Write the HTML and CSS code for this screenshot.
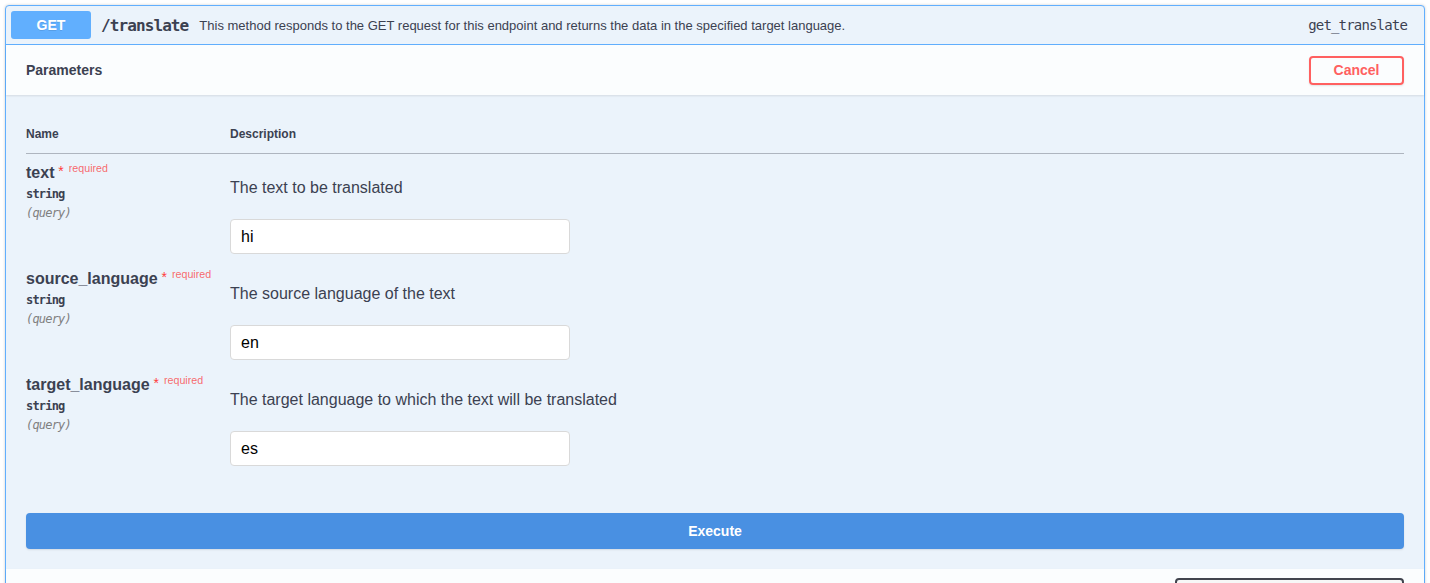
FILE: index.html
```html
<!DOCTYPE html>
<html lang="en">
<head>
<meta charset="utf-8">
<title>GET /translate</title>
<link rel="stylesheet" href="styles.css">
</head>
<body>
<div class="opblock">
  <div class="summary">
    <span class="method">GET</span>
    <span class="path">/translate</span>
    <span class="summary-desc">This method responds to the GET request for this endpoint and returns the data in the specified target language.</span>
    <span class="op-id">get_translate</span>
  </div>
  <div class="section-header">
    <h4 class="section-title">Parameters</h4>
    <button class="btn-cancel" type="button">Cancel</button>
  </div>
  <div class="table-container">
    <div class="param-head">
      <div class="col-name">Name</div>
      <div class="col-desc">Description</div>
    </div>
    <div class="param-row">
      <div class="col-name">
        <div class="param-name">text<span class="star">&nbsp;*</span><span class="req">required</span></div>
        <div class="param-type">string</div>
        <div class="param-in">(query)</div>
      </div>
      <div class="col-desc">
        <p class="desc-text">The text to be translated</p>
        <input class="param-input" type="text" value="hi">
      </div>
    </div>
    <div class="param-row">
      <div class="col-name">
        <div class="param-name">source_language<span class="star">&nbsp;*</span><span class="req">required</span></div>
        <div class="param-type">string</div>
        <div class="param-in">(query)</div>
      </div>
      <div class="col-desc">
        <p class="desc-text">The source language of the text</p>
        <input class="param-input" type="text" value="en">
      </div>
    </div>
    <div class="param-row">
      <div class="col-name">
        <div class="param-name">target_language<span class="star">&nbsp;*</span><span class="req">required</span></div>
        <div class="param-type">string</div>
        <div class="param-in">(query)</div>
      </div>
      <div class="col-desc">
        <p class="desc-text">The target language to which the text will be translated</p>
        <input class="param-input" type="text" value="es">
      </div>
    </div>
  </div>
  <div class="execute-wrapper">
    <button class="btn-execute" type="button">Execute</button>
  </div>
  <div class="section-header responses-header">
    <div class="ct-select" aria-label="Response content type"></div>
  </div>
</div>
</body>
</html>
```

FILE: styles.css
```css
* { box-sizing: border-box; }

body {
  margin: 0;
  background: #ffffff;
  font-family: "Liberation Sans", Arial, sans-serif;
  color: #3b4151;
}

.opblock {
  margin: 5px;
  border: 1px solid #61affe;
  border-radius: 4px;
  background: #ebf3fb;
  box-shadow: 0 0 3px rgba(0, 0, 0, 0.19);
}

.summary {
  display: flex;
  align-items: center;
  padding: 5px 17px 5px 5px;
  border-bottom: 1px solid #61affe;
}

.method {
  width: 80px;
  height: 28px;
  display: flex;
  align-items: center;
  justify-content: center;
  background: #61affe;
  color: #ffffff;
  border-radius: 3px;
  font-size: 14px;
  font-weight: 700;
  text-shadow: 0 1px 0 rgba(0, 0, 0, 0.1);
}

.path {
  padding: 0 10px;
  font-family: "DejaVu Sans Mono", monospace;
  font-size: 16px;
  letter-spacing: -0.9px;
  font-weight: 700;
  color: #3b4151;
}

.summary-desc {
  flex: 1 1 auto;
  margin-left: 1px;
  font-size: 13px;
  color: #3b4151;
}

.op-id {
  font-family: "DejaVu Sans Mono", monospace;
  font-size: 14px;
  letter-spacing: -0.83px;
  color: #3b4151;
}

.section-header {
  display: flex;
  align-items: center;
  justify-content: space-between;
  min-height: 50px;
  padding: 8px 20px;
  background: rgba(255, 255, 255, 0.8);
  box-shadow: 0 1px 2px rgba(0, 0, 0, 0.1);
}

.section-title {
  margin: 0;
  font-size: 14px;
  font-weight: 700;
  color: #3b4151;
}

.btn-cancel {
  width: 95px;
  height: 29px;
  padding: 0;
  border: 2px solid #ff6060;
  border-radius: 4px;
  background: transparent;
  color: #ff6060;
  font-family: "Liberation Sans", Arial, sans-serif;
  font-size: 14px;
  font-weight: 700;
  box-shadow: 0 1px 2px rgba(0, 0, 0, 0.1);
}

.table-container {
  padding: 20px 20px 21px 20px;
}

.param-head {
  display: grid;
  grid-template-columns: 204px 1fr;
  padding: 12px 0 11px;
  border-bottom: 1px solid rgba(59, 65, 81, 0.35);
  font-size: 12px;
  font-weight: 700;
  line-height: 15px;
}

.param-row {
  display: grid;
  grid-template-columns: 204px 1fr;
  padding: 8px 0 6px;
}

.param-name {
  font-size: 16px;
  font-weight: 700;
  line-height: 18px;
  color: #3b4151;
}

.star {
  color: #ff3b3b;
  font-size: 14px;
  vertical-align: 2px;
  font-weight: 400;
}

.req {
  position: relative;
  top: -6px;
  padding-left: 5px;
  font-size: 10.7px;
  font-weight: 400;
  color: rgba(255, 0, 0, 0.6);
}

.param-type {
  margin-top: 2px;
  font-family: "DejaVu Sans Mono", monospace;
  font-size: 12px;
  letter-spacing: -0.8px;
  font-weight: 700;
  line-height: 19px;
  color: #3b4151;
}

.param-in {
  font-family: "DejaVu Sans Mono", monospace;
  font-size: 12px;
  letter-spacing: -0.8px;
  font-style: italic;
  line-height: 19px;
  color: #808080;
}

.col-desc {
  display: flex;
  flex-direction: column;
  align-items: flex-start;
}

.desc-text {
  margin: 17px 0 22px;
  font-size: 16px;
  line-height: 18px;
  color: #3b4151;
}

.param-input {
  width: 340px;
  height: 35px;
  padding: 0 10px;
  border: 1px solid #d9d9d9;
  border-radius: 4px;
  background: #ffffff;
  font-family: "Liberation Sans", Arial, sans-serif;
  font-size: 16px;
  color: #000000;
}

.execute-wrapper {
  padding: 20px;
}

.btn-execute {
  display: block;
  width: 100%;
  height: 36px;
  border: 0;
  border-radius: 4px;
  background: #4990e2;
  color: #ffffff;
  font-family: "Liberation Sans", Arial, sans-serif;
  font-size: 14px;
  font-weight: 700;
  box-shadow: 0 1px 2px rgba(0, 0, 0, 0.1);
}

.responses-header {
  justify-content: flex-end;
  padding-top: 9px;
}

.ct-select {
  width: 229px;
  height: 34px;
  border: 2px solid #41444e;
  border-radius: 4px;
  background: #f7f7f7;
}
```
